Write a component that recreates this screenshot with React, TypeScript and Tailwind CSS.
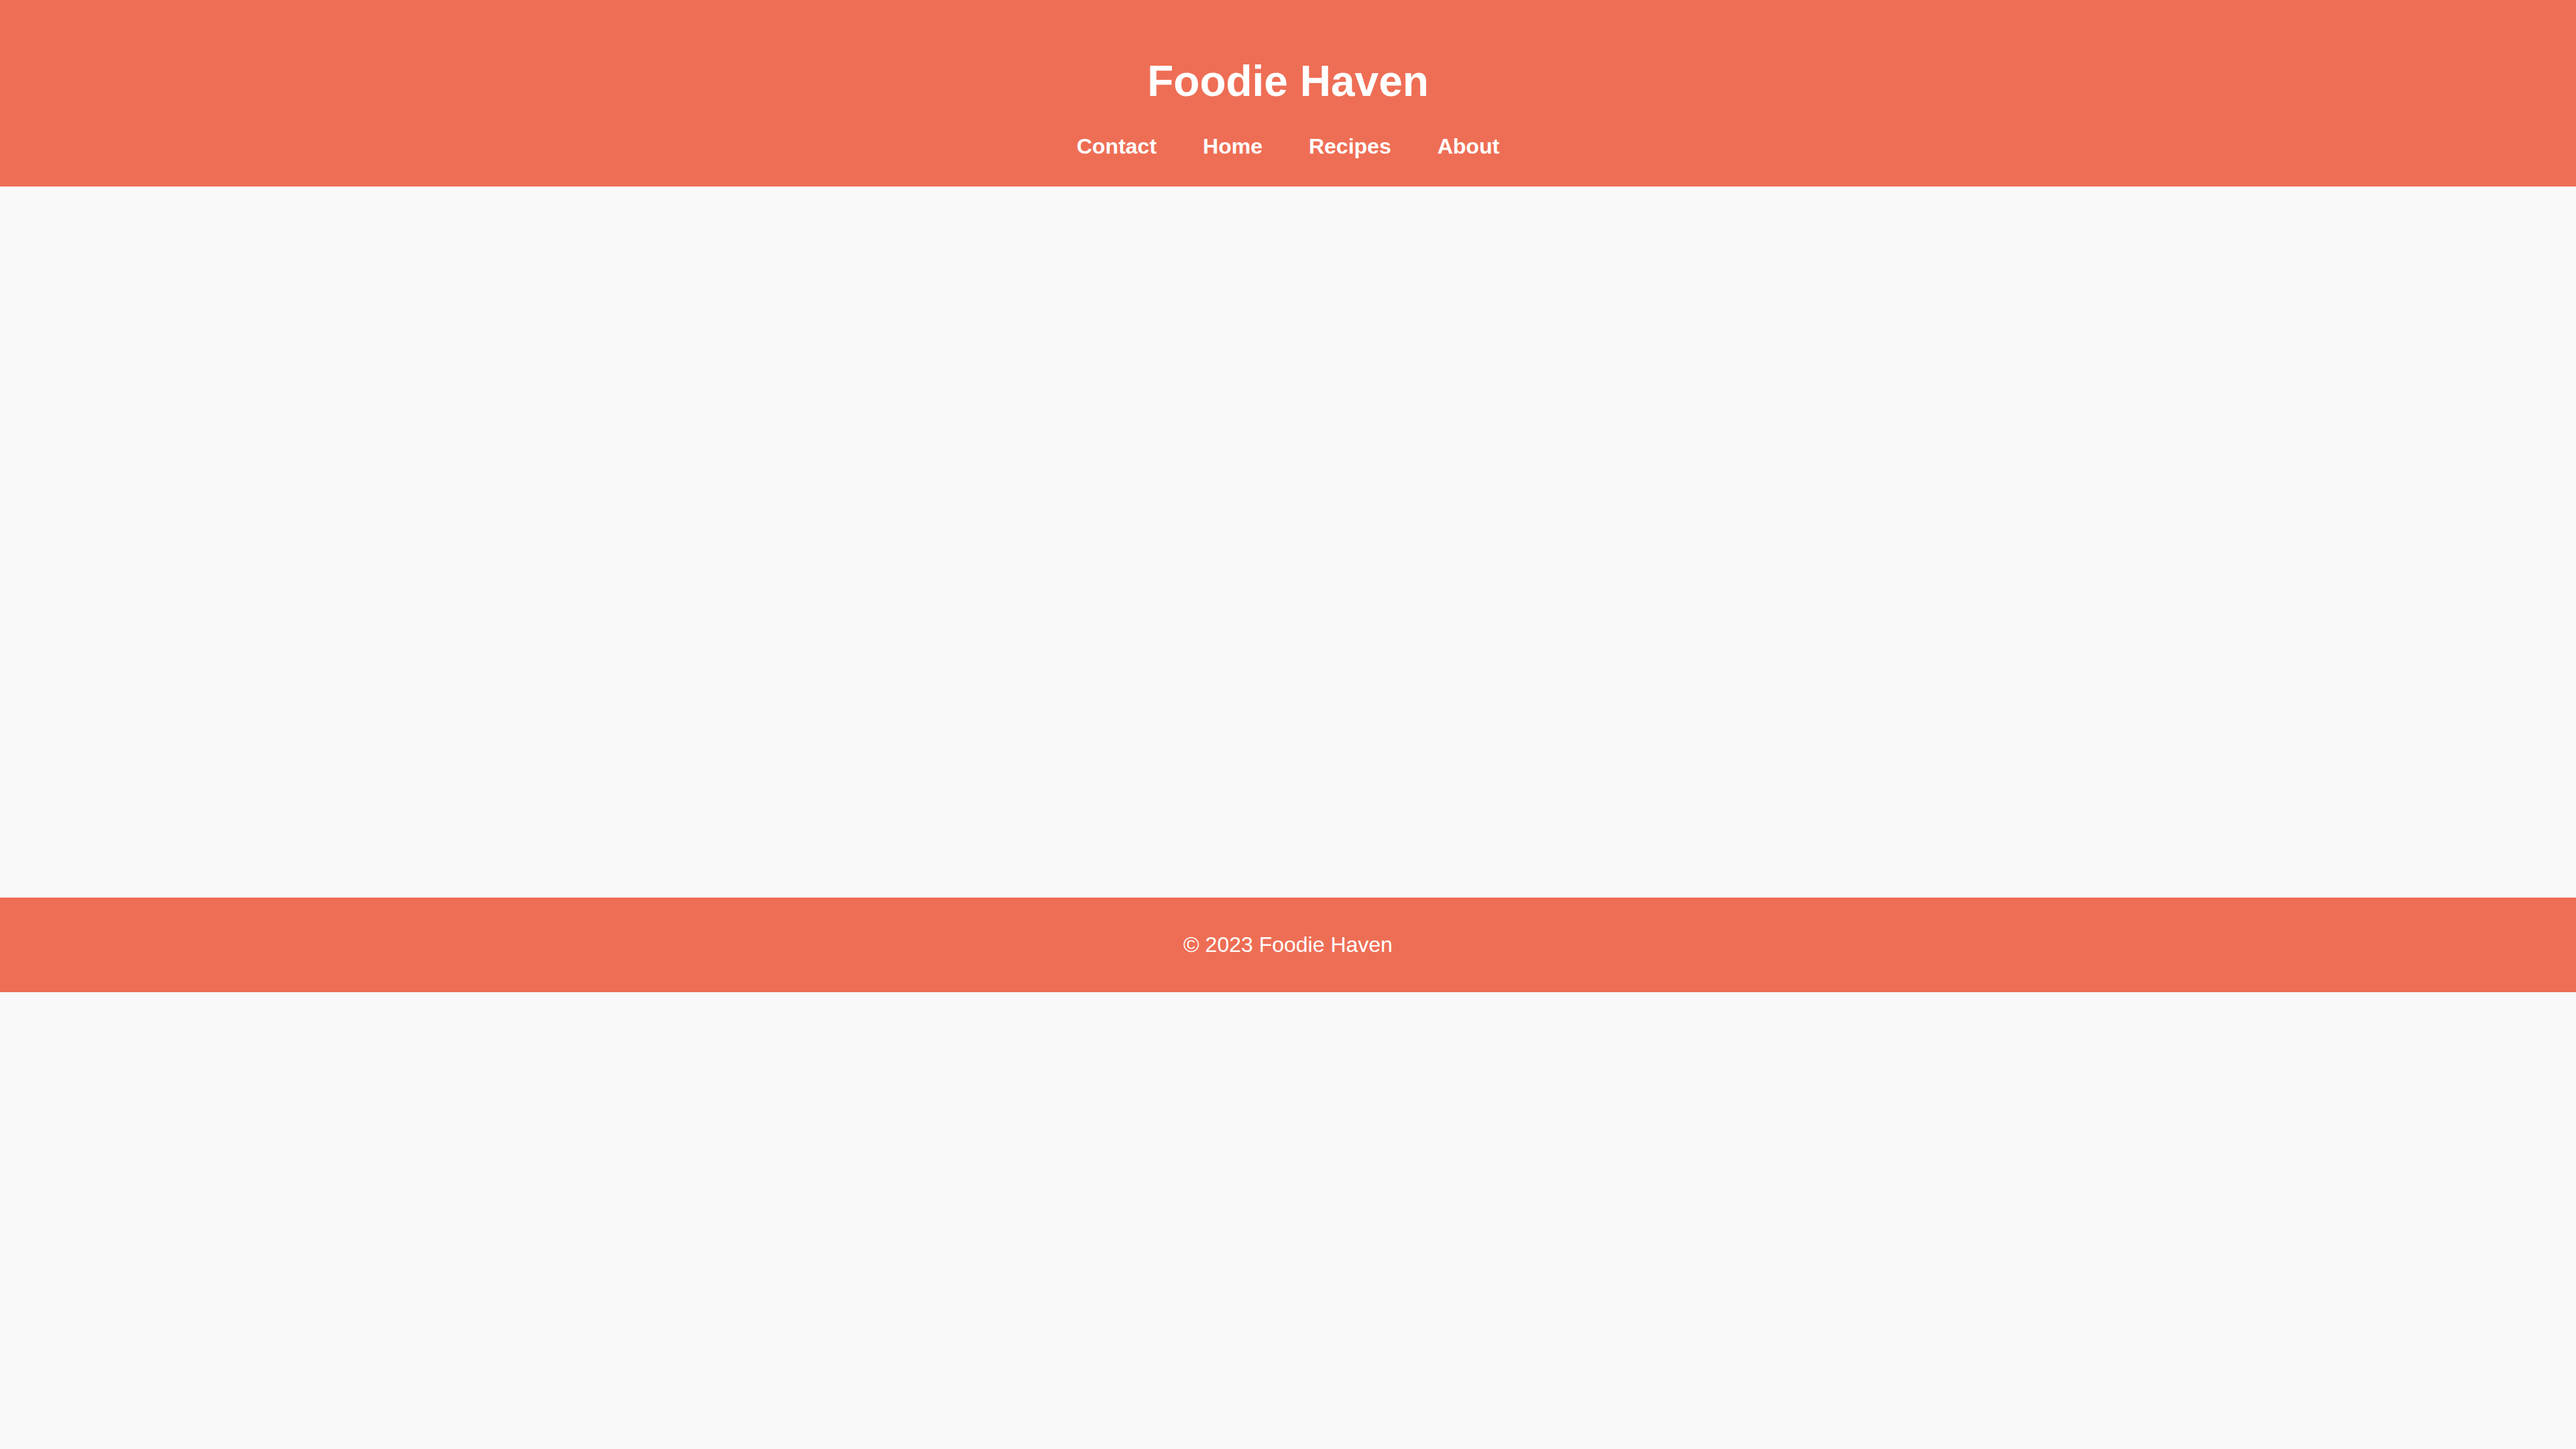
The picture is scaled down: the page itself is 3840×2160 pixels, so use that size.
const navLinks = ['Contact', 'Home', 'Recipes', 'About']

export default function App() {
  return (
    <div className="min-h-screen bg-[#f9f9f9] font-['Liberation_Sans',Arial,sans-serif]">
      {/* Header */}
      <header className="bg-[#ee6e55] text-white pt-[84px] pb-[41px] text-center">
        <h1 className="text-[64px] leading-[74px] font-bold">Foodie Haven</h1>
        <nav className="mt-[42px]">
          <ul className="flex justify-center gap-[69px]">
            {navLinks.map((link) => (
              <li key={link}>
                <a href="#" className="text-[32px] leading-[37px] font-bold text-white">
                  {link}
                </a>
              </li>
            ))}
          </ul>
        </nav>
      </header>

      {/* Main content (empty) */}
      <main className="h-[1060px]" />

      {/* Footer */}
      <footer className="bg-[#ee6e55] text-white py-[52px] text-center">
        <p className="text-[32px] leading-[37px]">© 2023 Foodie Haven</p>
      </footer>
    </div>
  )
}
